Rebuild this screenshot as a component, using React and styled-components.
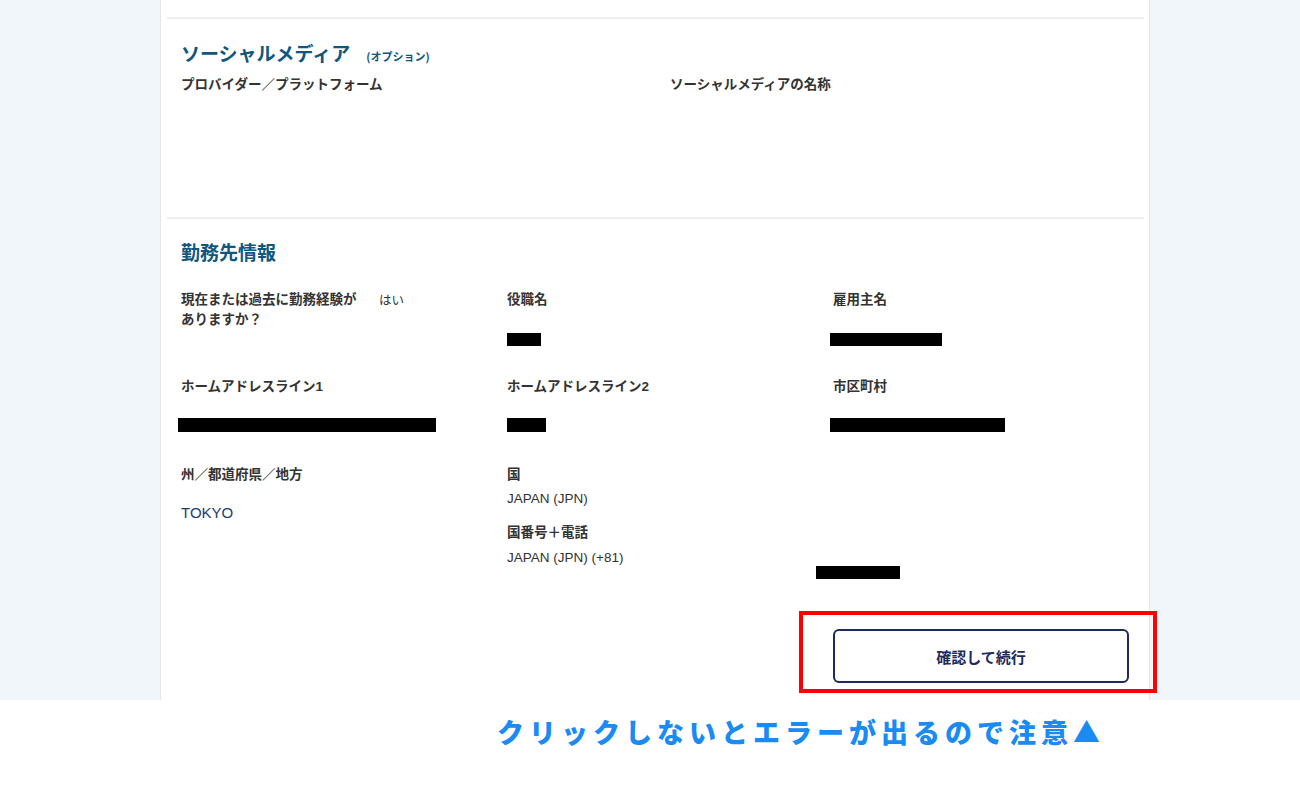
import React from "react";
import styled, { createGlobalStyle } from "styled-components";

const Global = createGlobalStyle`
  html, body { margin: 0; padding: 0; background: #ffffff; }
  body { font-family: "Liberation Sans", "Noto Sans CJK JP", sans-serif; color: #333; }
`;

const Backdrop = styled.div`
  background: #f1f6fa;
  height: 700px;
  overflow: hidden;
`;

const Card = styled.div`
  box-sizing: border-box;
  margin-left: 160px;
  width: 990px;
  height: 700px;
  padding-top: 17px;
  background: #ffffff;
  border-left: 1px solid #e3e7ea;
  border-right: 1px solid #e3e7ea;
`;

const Divider = styled.div`
  height: 2px;
  background: #eeeff0;
  margin: 0 5px 0 6px;
`;

const Section = styled.section`
  display: flow-root;
  padding: 0 20px;
  height: ${(p) => (p.$height ? `${p.$height}px` : "auto")};
`;

const Heading = styled.h2`
  margin: ${(p) => p.$top}px 0 0;
  font-family: "Noto Sans CJK JP", sans-serif;
  font-size: 19px;
  line-height: 28px;
  font-weight: 700;
  color: #10577e;
  display: flex;
  align-items: baseline;
  gap: 16px;
`;

const Optional = styled.span`
  font-size: 11px;
  font-weight: 700;
  color: #10577e;
`;

const Grid = styled.div`
  display: grid;
  grid-template-columns: repeat(${(p) => p.$cols}, 1fr);
  column-gap: 30px;
  margin-top: ${(p) => p.$top}px;
`;

const Field = styled.div`
  display: flex;
  flex-direction: column;
  align-items: flex-start;
`;

const Label = styled.div`
  font-family: "Liberation Sans", "Noto Sans CJK JP", sans-serif;
  font-size: 13.5px;
  line-height: 20px;
  font-weight: 700;
  color: #333;
  margin-top: ${(p) => p.$top || 0}px;
`;

const InlinePair = styled.div`
  display: flex;
  align-items: flex-start;
`;

const PairLabel = styled(Label)`
  width: 198px;
  flex: none;
`;

const SmallValue = styled.div`
  font-family: "Noto Sans CJK JP", sans-serif;
  font-size: 12.5px;
  line-height: 20px;
  color: #333;
`;

const Value = styled.div`
  font-size: 13.5px;
  line-height: 20px;
  color: #333;
  margin-top: ${(p) => p.$top || 0}px;
`;

const State = styled.div`
  font-size: 15px;
  line-height: 20px;
  color: #1f3a70;
  margin-top: ${(p) => p.$top || 0}px;
`;

const Redacted = styled.div`
  background: #000;
  height: ${(p) => p.$h || 14}px;
  width: ${(p) => p.$w}px;
  margin-top: ${(p) => p.$top || 0}px;
  margin-left: ${(p) => p.$shift || 0}px;
`;

const ActionRow = styled.div`
  display: grid;
  grid-template-columns: repeat(3, 1fr);
  column-gap: 30px;
  margin-top: 50px;
`;

const ButtonSlot = styled.div`
  grid-column: 3;
  position: relative;
`;

const PrimaryButton = styled.button`
  box-sizing: border-box;
  width: 100%;
  height: 54px;
  border: 2px solid #1c2b5e;
  border-radius: 6px;
  background: #fff;
  color: #1c2b5e;
  font-family: "Noto Sans CJK JP", sans-serif;
  font-size: 15px;
  font-weight: 700;
  cursor: pointer;
`;

const Highlight = styled.div`
  position: absolute;
  left: -34px;
  right: -28px;
  top: -18px;
  bottom: -10px;
  border: 4px solid #ff0000;
  pointer-events: none;
`;

const Note = styled.div`
  padding: 11px 0 0 497px;
  font-family: "Noto Sans CJK JP", sans-serif;
  font-size: 27px;
  line-height: 42px;
  font-weight: 900;
  letter-spacing: 5px;
  color: #1a8bf2;
  white-space: nowrap;
`;

export default function App() {
  return (
    <>
      <Global />
      <Backdrop>
        <Card>
          <Divider />
          <Section $height={198}>
            <Heading $top={20}>
              ソーシャルメディア
              <Optional>(オプション)</Optional>
            </Heading>
            <Grid $cols={2} $top={5}>
              <Label>プロバイダー／プラットフォーム</Label>
              <Label>ソーシャルメディアの名称</Label>
            </Grid>
          </Section>
          <Divider />
          <Section>
            <Heading $top={19}>勤務先情報</Heading>
            <Grid $cols={3} $top={24}>
              <Field>
                <InlinePair>
                  <PairLabel>
                    現在または過去に勤務経験が
                    <br />
                    ありますか？
                  </PairLabel>
                  <SmallValue>はい</SmallValue>
                </InlinePair>
              </Field>
              <Field>
                <Label>役職名</Label>
                <Redacted $w={34} $h={13} $top={23} />
              </Field>
              <Field>
                <Label>雇用主名</Label>
                <Redacted $w={112} $h={13} $top={23} $shift={-3} />
              </Field>
            </Grid>
            <Grid $cols={3} $top={31}>
              <Field>
                <Label>ホームアドレスライン1</Label>
                <Redacted $w={258} $top={21} $shift={-3} />
              </Field>
              <Field>
                <Label>ホームアドレスライン2</Label>
                <Redacted $w={39} $top={21} />
              </Field>
              <Field>
                <Label>市区町村</Label>
                <Redacted $w={175} $top={21} $shift={-3} />
              </Field>
            </Grid>
            <Grid $cols={3} $top={33}>
              <Field>
                <Label>州／都道府県／地方</Label>
                <State $top={18}>TOKYO</State>
              </Field>
              <Field>
                <Label>国</Label>
                <Value $top={4}>JAPAN (JPN)</Value>
                <Label $top={14}>国番号＋電話</Label>
                <Value $top={5}>JAPAN (JPN) (+81)</Value>
              </Field>
              <Field>
                <Redacted $w={84} $h={13} $top={101} $shift={-17} />
              </Field>
            </Grid>
            <ActionRow>
              <ButtonSlot>
                <PrimaryButton type="button">確認して続行</PrimaryButton>
                <Highlight />
              </ButtonSlot>
            </ActionRow>
          </Section>
        </Card>
      </Backdrop>
      <Note>クリックしないとエラーが出るので注意▲</Note>
    </>
  );
}
